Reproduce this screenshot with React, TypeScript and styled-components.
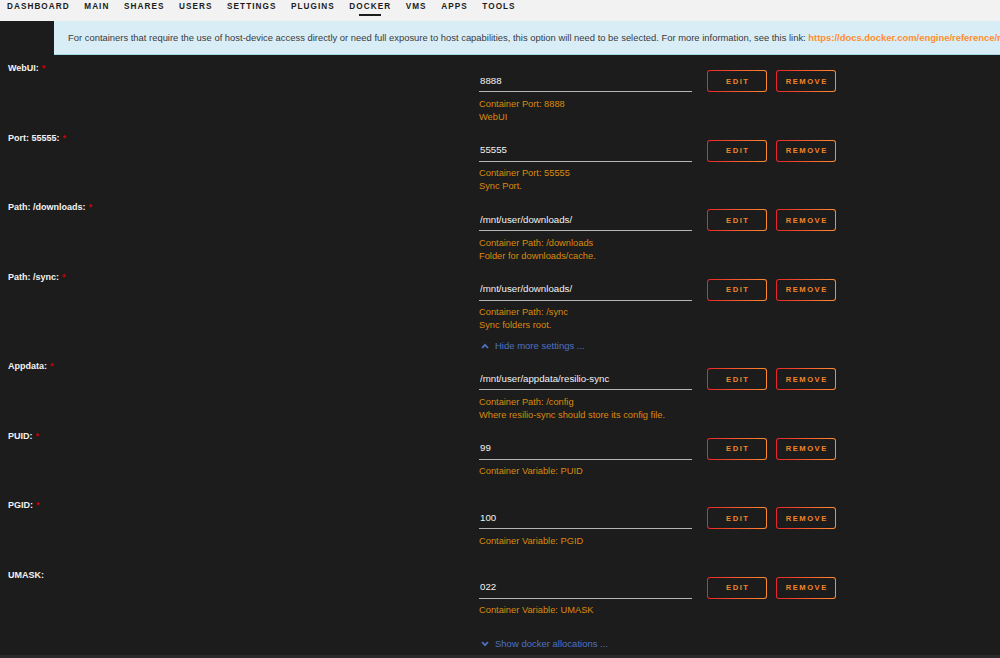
import React from "react";
import styled, { createGlobalStyle } from "styled-components";

const Global = createGlobalStyle`
  html, body { margin: 0; padding: 0; background: #1c1c1c; }
  body { font-family: "Liberation Sans", Arial, sans-serif; overflow: hidden; }
  * { box-sizing: border-box; }
`;

const Page = styled.div`
  width: 1000px;
  height: 658px;
  background: #1c1c1c;
  display: flex;
  flex-direction: column;
  overflow: hidden;
`;

const Nav = styled.nav`
  height: 21px;
  background: #f2f2f2;
  display: flex;
  gap: 14.6px;
  padding-left: 7px;
  flex-shrink: 0;
`;

const NavItem = styled.span<{ $active?: boolean }>`
  position: relative;
  font-size: 8.2px;
  font-weight: 700;
  letter-spacing: 1.05px;
  line-height: 14px;
  color: #1c1c1c;
  &::after {
    content: "";
    display: ${(p) => (p.$active ? "block" : "none")};
    position: absolute;
    left: 50%;
    transform: translateX(-50%);
    top: 14px;
    width: 22px;
    height: 2px;
    background: #1c1c1c;
  }
`;

const Banner = styled.div`
  margin-left: 54px;
  height: 34px;
  background: #d9edf7;
  border-bottom: 1px solid #9fd9ea;
  padding-left: 14px;
  display: flex;
  align-items: center;
  white-space: nowrap;
  overflow: hidden;
  font-size: 9.42px;
  color: #3a3a3a;
  flex-shrink: 0;
`;

const Link = styled.span`
  color: #ff8c2f;
  font-weight: 700;
`;

const Rows = styled.div`
  display: flex;
  flex-direction: column;
  flex: 1;
`;

const Row = styled.div`
  height: 69.5px;
  display: grid;
  grid-template-columns: 471px 1fr;
  padding-left: 8px;
`;

const Label = styled.div`
  padding-top: 6px;
  font-size: 9px;
  font-weight: 700;
  line-height: 14px;
  color: #f2f2f2;
`;

const Req = styled.span`
  color: #c00;
  margin-left: 3px;
`;

const Content = styled.div`
  padding-top: 15px;
  display: flex;
  flex-direction: column;
`;

const Controls = styled.div`
  display: flex;
  align-items: flex-start;
`;

const Field = styled.input`
  width: 213px;
  height: 22px;
  padding: 0 1px 1px;
  background: transparent;
  border: none;
  border-bottom: 1px solid #b5b5b5;
  color: #f2f2f2;
  font-family: "Liberation Sans", Arial, sans-serif;
  font-size: 9.7px;
  outline: none;
  margin-right: 15px;
`;

const Btn = styled.button`
  width: 60px;
  height: 22px;
  margin-right: 9px;
  border: 1.3px solid transparent;
  border-radius: 3px;
  background:
    linear-gradient(#1c1c1c, #1c1c1c) padding-box,
    linear-gradient(90deg, #e8262a, #ff8c2f) border-box;
  color: #f0862a;
  font-family: "Liberation Sans", Arial, sans-serif;
  font-size: 7.6px;
  font-weight: 700;
  letter-spacing: 1.5px;
  padding: 0 0 0 1.5px;
  cursor: pointer;
`;

const Desc = styled.div`
  margin-top: 5.5px;
  font-size: 9.3px;
  line-height: 13px;
  color: #da8a0c;
`;

const Toggle = styled.div`
  height: 20px;
  padding: 6px 0 0 481px;
  display: flex;
  align-items: center;
  gap: 6px;
  line-height: 14px;
  font-size: 9.5px;
  color: #4e72c2;
  flex-shrink: 0;
`;

const Footer = styled.div`
  margin-top: auto;
  height: 3px;
  background: #2a2a2a;
`;

type Item = { label: string; req: boolean; value: string; desc: string[] };

const first: Item[] = [
  { label: "WebUI:", req: true, value: "8888", desc: ["Container Port: 8888", "WebUI"] },
  { label: "Port: 55555:", req: true, value: "55555", desc: ["Container Port: 55555", "Sync Port."] },
  { label: "Path: /downloads:", req: true, value: "/mnt/user/downloads/", desc: ["Container Path: /downloads", "Folder for downloads/cache."] },
  { label: "Path: /sync:", req: true, value: "/mnt/user/downloads/", desc: ["Container Path: /sync", "Sync folders root."] },
];

const second: Item[] = [
  { label: "Appdata:", req: true, value: "/mnt/user/appdata/resilio-sync", desc: ["Container Path: /config", "Where resilio-sync should store its config file."] },
  { label: "PUID:", req: true, value: "99", desc: ["Container Variable: PUID"] },
  { label: "PGID:", req: true, value: "100", desc: ["Container Variable: PGID"] },
  { label: "UMASK:", req: false, value: "022", desc: ["Container Variable: UMASK"] },
];

const ConfigRow = ({ item }: { item: Item }) => (
  <Row>
    <Label>
      {item.label}
      {item.req && <Req>*</Req>}
    </Label>
    <Content>
      <Controls>
        <Field readOnly value={item.value} />
        <Btn>EDIT</Btn>
        <Btn>REMOVE</Btn>
      </Controls>
      <Desc>
        {item.desc.map((d) => (
          <div key={d}>{d}</div>
        ))}
      </Desc>
    </Content>
  </Row>
);

const Chevron = ({ up }: { up?: boolean }) => (
  <svg width="8" height="6" viewBox="0 0 8 6">
    <path
      d={up ? "M1 5 L4 1.8 L7 5" : "M1 1 L4 4.2 L7 1"}
      fill="none"
      stroke="#4e72c2"
      strokeWidth="1.8"
    />
  </svg>
);

const navItems = ["DASHBOARD", "MAIN", "SHARES", "USERS", "SETTINGS", "PLUGINS", "DOCKER", "VMS", "APPS", "TOOLS"];

export default function App() {
  return (
    <Page>
      <Global />
      <Nav>
        {navItems.map((n) => (
          <NavItem key={n} $active={n === "DOCKER"}>
            {n}
          </NavItem>
        ))}
      </Nav>
      <Banner>
        For containers that require the use of host-device access directly or need full exposure to host capabilities, this option will need to be selected. For more information, see this link:&nbsp;
        <Link>https://docs.docker.com/engine/reference/run/#runtime-privilege-and-linux-capabilities</Link>
      </Banner>
      <Rows>
        {first.map((it) => (
          <ConfigRow key={it.label} item={it} />
        ))}
        <Toggle>
          <Chevron up />
          Hide more settings ...
        </Toggle>
        {second.map((it) => (
          <ConfigRow key={it.label} item={it} />
        ))}
        <Toggle>
          <Chevron />
          Show docker allocations ...
        </Toggle>
        <Footer />
      </Rows>
    </Page>
  );
}
